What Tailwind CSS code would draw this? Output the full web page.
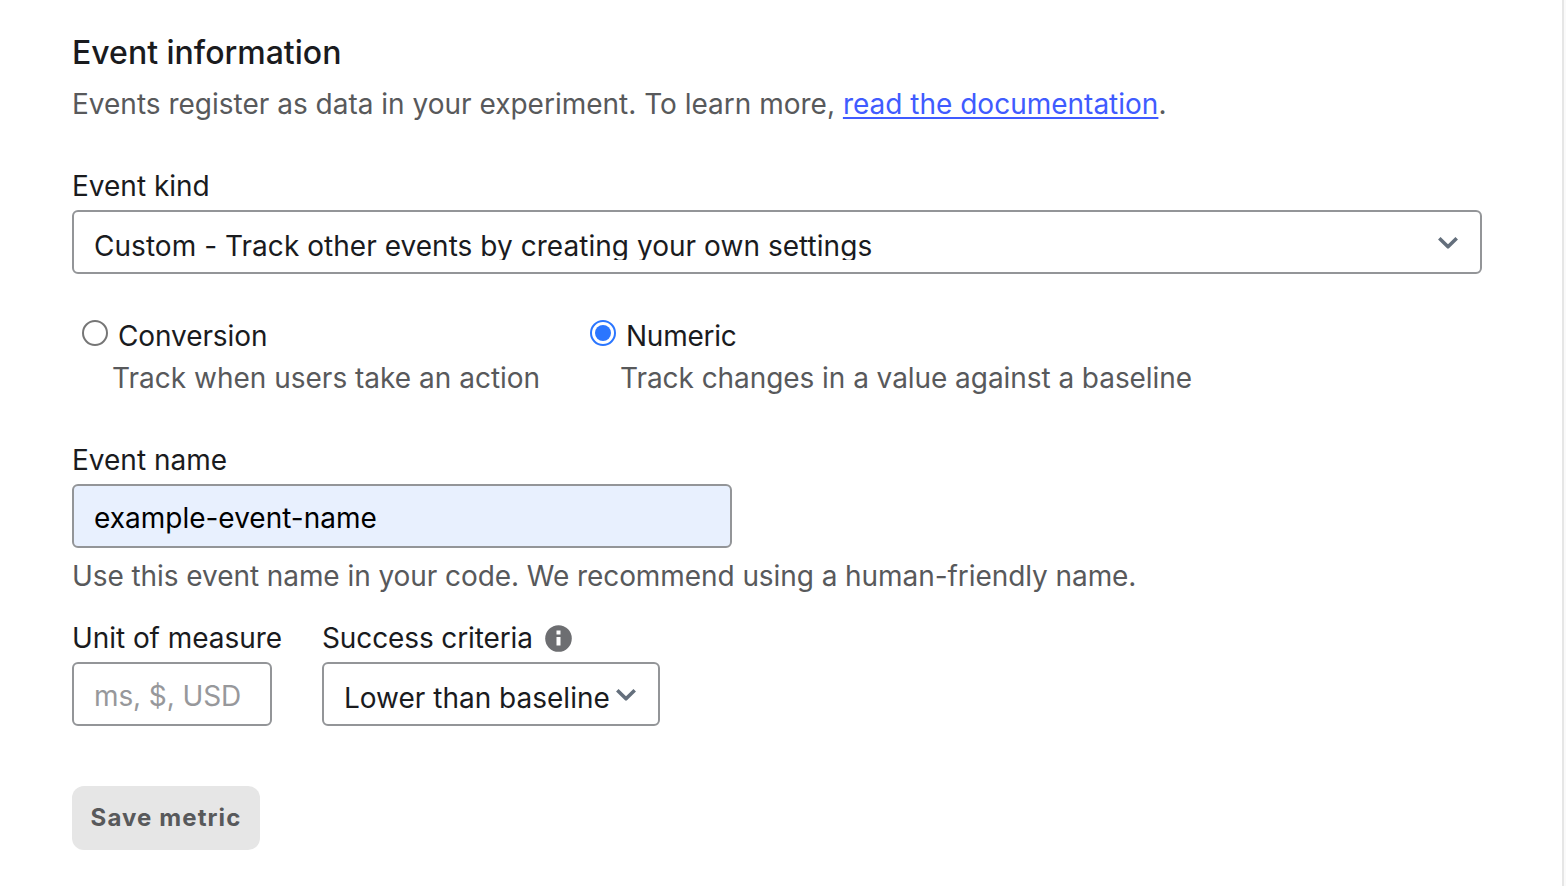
<!DOCTYPE html>
<html lang="en">
<head>
<meta charset="utf-8">
<title>Event information</title>
<script src="https://cdn.jsdelivr.net/npm/@tailwindcss/browser@4"></script>
</head>
<body class="bg-white font-['Inter',sans-serif] text-[28px] leading-10 text-[#1a1b1e]">
<div class="flex">
<main class="flex h-[886px] w-[1564px] flex-col items-start overflow-hidden border-r-2 border-[#e6e6e6] pl-[72px] pt-[33px] whitespace-nowrap">
  <h1 class="text-[32px] font-medium leading-10">Event information</h1>
  <p class="mt-[11px] text-[#58595b]">Events register as data in your experiment. To learn more, <a href="#" class="text-[#405bff] underline decoration-2 underline-offset-[3px]">read the documentation</a>.</p>
  <label class="mt-[42px]">Event kind</label>
  <div class="mt-1 flex h-16 w-[1410px] items-center justify-between rounded-md border-2 border-[#939598] pl-5 pr-[22px]">
    <div class="mt-4 h-8 self-start overflow-hidden leading-9 tracking-[0.04px]">Custom - Track other events by creating your own settings</div>
    <svg class="h-5 w-5" viewBox="0 0 20 20" fill="none" stroke="#646f7c" stroke-width="3.6" stroke-linejoin="round"><path d="M1.3 6.3l8.7 8.5 8.7-8.5"/></svg>
  </div>
  <div class="mt-[42px] flex">
    <div class="w-[508px] pl-[10px]">
      <div class="flex h-10 items-center gap-[10px]"><span class="mb-[6px] h-[26px] w-[26px] rounded-full border-2 border-[#767676]"></span><span class="tracking-[-0.1px]">Conversion</span></div>
      <p class="mt-[2px] pl-[30px] text-[#58595b]">Track when users take an action</p>
    </div>
    <div class="pl-[10px]">
      <div class="flex h-10 items-center gap-[10px]"><span class="mb-[6px] flex h-[26px] w-[26px] items-center justify-center rounded-full border-2 border-[#2b76ff]"><span class="h-4 w-4 rounded-full bg-[#2b76ff]"></span></span><span class="tracking-[-0.25px]">Numeric</span></div>
      <p class="mt-[2px] pl-[30px] tracking-[-0.06px] text-[#58595b]">Track changes in a value against a baseline</p>
    </div>
  </div>
  <label class="mt-[42px]">Event name</label>
  <div class="mt-1 flex h-16 w-[660px] items-center rounded-md border-2 border-[#939598] bg-[#e8f0fe] pl-5 pt-1 text-black">example-event-name</div>
  <p class="mt-2 tracking-[-0.07px] text-[#58595b]">Use this event name in your code. We recommend using a human-friendly name.</p>
  <div class="mt-[22px] flex">
    <div class="w-[250px]">
      <label class="block tracking-[-0.06px]">Unit of measure</label>
      <div class="mt-1 flex h-16 w-[200px] items-center rounded-md border-2 border-[#939598] pl-5 pt-1 tracking-[-0.1px] text-[#97989b]">ms, $, USD</div>
    </div>
    <div>
      <div class="flex items-center gap-3"><label class="tracking-[-0.12px]">Success criteria</label>
        <svg class="h-[27px] w-[27px]" viewBox="0 0 27 27"><circle cx="13.5" cy="13.5" r="13.3" fill="#6d6e71"/><path d="M11.5 5.5h4v4h-4zM11.5 12h4v8.5h-4z" fill="white"/></svg></div>
      <div class="mt-1 flex h-16 w-[338px] items-center justify-between rounded-md border-2 border-[#939598] pl-5 pr-[22px]"><span class="mt-2">Lower than baseline</span><svg class="h-5 w-5" viewBox="0 0 20 20" fill="none" stroke="#646f7c" stroke-width="3.6" stroke-linejoin="round"><path d="M1.3 6.3l8.7 8.5 8.7-8.5"/></svg></div>
    </div>
  </div>
  <button class="mt-[60px] h-16 w-[188px] rounded-xl bg-[#e6e6e6] text-2xl font-bold tracking-[1.1px] text-[#58595b]">Save metric</button>
</main>
<div class="h-[886px] w-[2px] bg-[#fafafa]"></div>
</div>
</body>
</html>
